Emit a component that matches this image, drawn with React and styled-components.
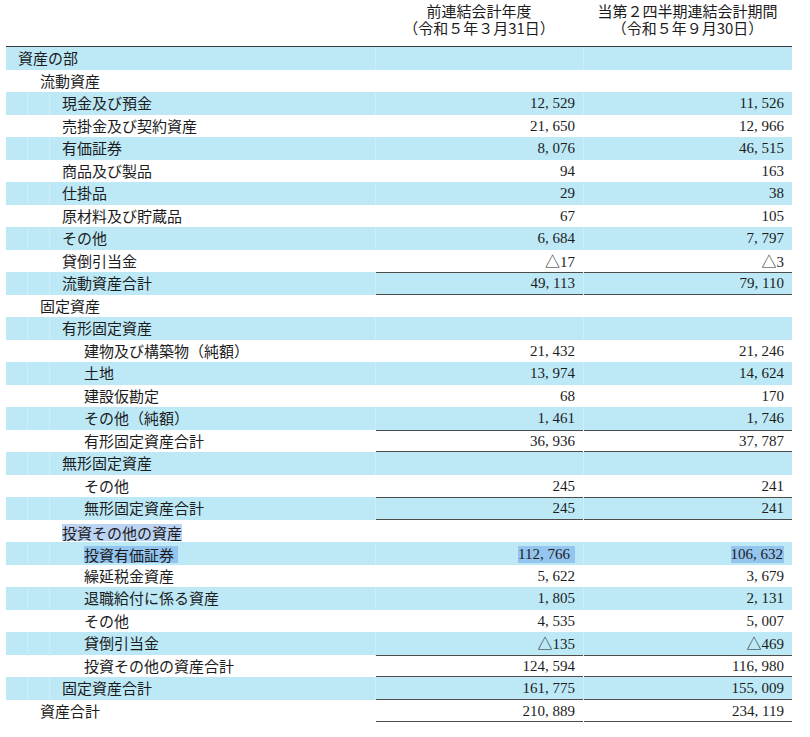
import React from "react";
import styled, { createGlobalStyle, css } from "styled-components";

const Global = createGlobalStyle`
  html, body { margin: 0; padding: 0; background: #ffffff; }
  body { font-family: "Noto Sans CJK JP", "Noto Sans", sans-serif; color: #1c1c1c; }
`;

const BLUE = "#bde9f7";
const RULE = "#4d4d4d";
const SEL = "rgba(80, 140, 225, 0.38)";

const Sheet = styled.div`
  width: 786px;
  margin-left: 6px;
`;

const HeadRow = styled.div`
  display: grid;
  grid-template-columns: 369px 208px 209px;
  border-bottom: 1.5px solid #3a3a3a;
  box-sizing: border-box;
  height: 47px;
`;

const HeadCell = styled.div`
  padding-top: 3px;
  text-align: center;
  font-size: 15px;
  color: #1c1c1c;
`;

const HeadLine = styled.div`
  height: 16.5px;
  line-height: 16.5px;
  white-space: nowrap;
`;

const Row = styled.div`
  display: grid;
  grid-template-columns: 369px 208px 209px;
  height: 22.5px;
  background: ${(p) => (p.$shade ? BLUE : "#ffffff")};
`;

const LabelCell = styled.div`
  padding-left: ${(p) => 12 + p.$level * 22}px;
  font-size: 15px;
  line-height: 22.5px;
  white-space: nowrap;
  ${(p) =>
    p.$guides &&
    css`
      background-image: linear-gradient(
          to right,
          transparent 21px,
          #ccf0fb 21px,
          #ccf0fb 22px,
          transparent 22px
        ),
        linear-gradient(
          to right,
          transparent 43px,
          #ccf0fb 43px,
          #ccf0fb 44px,
          transparent 44px
        );
    `}
`;

const NumCell = styled.div`
  text-align: right;
  padding-right: 8px;
  font-family: "Liberation Serif", "Noto Sans CJK JP", serif;
  font-size: 15px;
  line-height: 22.5px;
  white-space: nowrap;
  border-left: 1px solid ${(p) => (p.$shade ? "#caeffa" : "transparent")};
  box-shadow: ${(p) =>
    [
      p.$top ? `inset 0 1px 0 ${RULE}` : null,
      p.$bottom ? `inset 0 -1px 0 ${RULE}` : null,
    ]
      .filter(Boolean)
      .join(", ") || "none"};
`;

const Comma = styled.span`
  display: inline-block;
  width: 0.5em;
  text-align: left;
`;

const Tri = styled.span`
  font-family: "Noto Sans CJK JP", sans-serif;
  font-size: 15px;
`;

const Selected = styled.span`
  display: inline-block;
  line-height: 17px;
  background: ${SEL};
  padding-right: ${(p) => p.$tail || 0}px;
  vertical-align: middle;
`;

const rows = [
  { label: "資産の部", level: 0 },
  { label: "流動資産", level: 1 },
  { label: "現金及び預金", level: 2, a: "12,529", b: "11,526" },
  { label: "売掛金及び契約資産", level: 2, a: "21,650", b: "12,966" },
  { label: "有価証券", level: 2, a: "8,076", b: "46,515" },
  { label: "商品及び製品", level: 2, a: "94", b: "163" },
  { label: "仕掛品", level: 2, a: "29", b: "38" },
  { label: "原材料及び貯蔵品", level: 2, a: "67", b: "105" },
  { label: "その他", level: 2, a: "6,684", b: "7,797" },
  { label: "貸倒引当金", level: 2, a: "△17", b: "△3" },
  { label: "流動資産合計", level: 2, a: "49,113", b: "79,110", top: true, bottom: true },
  { label: "固定資産", level: 1 },
  { label: "有形固定資産", level: 2 },
  { label: "建物及び構築物（純額）", level: 3, a: "21,432", b: "21,246" },
  { label: "土地", level: 3, a: "13,974", b: "14,624" },
  { label: "建設仮勘定", level: 3, a: "68", b: "170" },
  { label: "その他（純額）", level: 3, a: "1,461", b: "1,746" },
  { label: "有形固定資産合計", level: 3, a: "36,936", b: "37,787", top: true, bottom: true },
  { label: "無形固定資産", level: 2 },
  { label: "その他", level: 3, a: "245", b: "241" },
  { label: "無形固定資産合計", level: 3, a: "245", b: "241", top: true, bottom: true },
  { label: "投資その他の資産", level: 2, selLabel: true },
  { label: "投資有価証券", level: 3, a: "112,766", b: "106,632", selLabel: true, selNums: true },
  { label: "繰延税金資産", level: 3, a: "5,622", b: "3,679" },
  { label: "退職給付に係る資産", level: 3, a: "1,805", b: "2,131" },
  { label: "その他", level: 3, a: "4,535", b: "5,007" },
  { label: "貸倒引当金", level: 3, a: "△135", b: "△469" },
  { label: "投資その他の資産合計", level: 3, a: "124,594", b: "116,980", top: true, bottom: true },
  { label: "固定資産合計", level: 2, a: "161,775", b: "155,009", bottom: true },
  { label: "資産合計", level: 1, a: "210,889", b: "234,119", bottom: true },
];

function Num({ value }) {
  if (!value) return null;
  const out = [];
  let rest = value;
  if (rest.startsWith("△")) {
    out.push(<Tri key="t">△</Tri>);
    rest = rest.slice(1);
  }
  const parts = rest.split(",");
  parts.forEach((p, i) => {
    if (i > 0) out.push(<Comma key={"c" + i}>,</Comma>);
    out.push(<React.Fragment key={"d" + i}>{p}</React.Fragment>);
  });
  return <>{out}</>;
}

export default function App() {
  return (
    <>
      <Global />
      <Sheet>
        <HeadRow>
          <HeadCell />
          <HeadCell>
            <HeadLine>前連結会計年度</HeadLine>
            <HeadLine>（令和５年３月31日）</HeadLine>
          </HeadCell>
          <HeadCell>
            <HeadLine>当第２四半期連結会計期間</HeadLine>
            <HeadLine>（令和５年９月30日）</HeadLine>
          </HeadCell>
        </HeadRow>
        {rows.map((r, i) => {
          const shade = i % 2 === 0;
          return (
            <Row key={i} $shade={shade}>
              <LabelCell $level={r.level} $guides={shade && r.level >= 2}>
                {r.selLabel ? (
                  <Selected $tail={r.selNums ? 4 : 0}>{r.label}</Selected>
                ) : (
                  r.label
                )}
              </LabelCell>
              <NumCell $shade={shade} $top={r.top} $bottom={r.bottom}>
                {r.selNums ? (
                  <Selected $tail={5}>
                    <Num value={r.a} />
                  </Selected>
                ) : (
                  <Num value={r.a} />
                )}
              </NumCell>
              <NumCell $shade={shade} $top={r.top} $bottom={r.bottom}>
                {r.selNums ? (
                  <Selected $tail={1}>
                    <Num value={r.b} />
                  </Selected>
                ) : (
                  <Num value={r.b} />
                )}
              </NumCell>
            </Row>
          );
        })}
      </Sheet>
    </>
  );
}
